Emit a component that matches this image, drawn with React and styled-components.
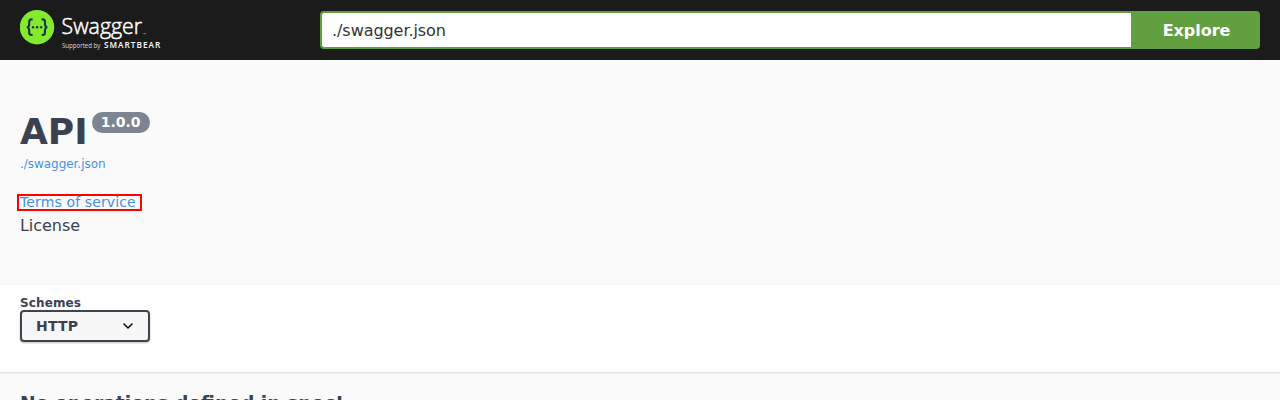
import React from "react";
import styled, { createGlobalStyle } from "styled-components";

const GlobalStyle = createGlobalStyle`
  *, *::before, *::after { box-sizing: border-box; }
  html { overflow: hidden; }
  body {
    margin: 0;
    background: #fafafa;
    color: #3b4151;
    font-family: "DejaVu Sans", sans-serif;
  }
`;

const Page = styled.div`
  height: 400px;
  overflow: hidden;
`;

const Topbar = styled.header`
  display: flex;
  align-items: center;
  height: 60px;
  padding: 0 20px;
  background: #1b1b1b;
`;

const LogoLink = styled.a`
  flex: 0 0 300px;
  height: 40px;
`;

const UrlForm = styled.form`
  display: flex;
  flex: 1;
  height: 38px;
`;

const UrlInput = styled.input`
  flex: 1;
  min-width: 0;
  margin: 0;
  padding: 0 10px;
  border: 2px solid #62a03f;
  border-right: 0;
  border-radius: 4px 0 0 4px;
  outline: none;
  background: #fff;
  color: #333;
  font: 400 16px "DejaVu Sans", sans-serif;
  letter-spacing: -0.06px;
`;

const ExploreButton = styled.button`
  width: 129px;
  padding: 0 0 0 2px;
  border: 0;
  border-radius: 0 4px 4px 0;
  background: #62a03f;
  color: #fff;
  font: 700 16px "DejaVu Sans", sans-serif;
  letter-spacing: -0.05px;
`;

const Info = styled.section`
  height: 225px;
  padding: 50px 20px 0;
`;

const Title = styled.h2`
  display: flex;
  align-items: flex-start;
  gap: 4px;
  height: 43px;
  margin: 0;
  font-size: 36px;
  line-height: 43px;
  font-weight: 700;
`;

const Version = styled.span`
  height: 21px;
  margin-top: 2px;
  padding: 0 9px;
  border-radius: 21px;
  background: #7d8492;
  color: #fff;
  font-size: 14px;
  line-height: 21px;
`;

const SpecLink = styled.a`
  display: block;
  margin-top: 4px;
  color: #4990e2;
  font-size: 12px;
  line-height: 15px;
  letter-spacing: -0.04px;
`;

const TermsLink = styled.a`
  display: block;
  width: 125px;
  height: 17px;
  margin: 22px 0 0 -3px;
  padding-left: 1px;
  border: 2px solid #f00;
  color: #4990e2;
  font-size: 14px;
  line-height: 13px;
  letter-spacing: 0.13px;
  white-space: nowrap;
`;

const License = styled.div`
  margin-top: 5px;
  font-size: 16px;
  line-height: 19px;
  letter-spacing: -0.05px;
`;

const SchemeBar = styled.section`
  position: relative;
  height: 87px;
  padding: 10px 20px 0;
  background: #fff;
  box-shadow: 0 1px 2px rgba(0, 0, 0, 0.15);
`;

const SchemeLabel = styled.div`
  height: 15px;
  font-size: 12px;
  line-height: 17px;
  font-weight: 700;
  letter-spacing: 0.13px;
`;

const SchemeSelect = styled.div`
  display: flex;
  align-items: center;
  justify-content: space-between;
  width: 130px;
  height: 32px;
  padding: 0 15px 0 14px;
  border: 2px solid #41444e;
  border-radius: 4px;
  background: #f7f7f7;
  box-shadow: 0 1px 2px rgba(0, 0, 0, 0.25);
  font-size: 14px;
  font-weight: 700;
  letter-spacing: 0.2px;
`;

const EmptyMessage = styled.h3`
  margin: 21px 20px 0;
  font-size: 18.72px;
  line-height: 22px;
  font-weight: 700;
  white-space: nowrap;
`;

function Logo() {
  return (
    <svg width="144" height="40" viewBox="0 0 144 40" fill="#fff" fontFamily="Open Sans, sans-serif">
      <circle cx="17" cy="17.2" r="17.2" fill="#85ea2d" />
      <g fill="none" stroke="#173647" strokeWidth="2.1">
        <path d="M12.6 9.4h-1c-1.8 0-2.4.8-2.4 2.5v2.3c0 1.9-.7 2.8-2.3 3 1.6.2 2.3 1.1 2.3 3v2.3c0 1.7.6 2.5 2.4 2.5h1" />
        <path d="M21.6 9.4h1c1.8 0 2.4.8 2.4 2.5v2.3c0 1.9.7 2.8 2.3 3-1.6.2-2.3 1.1-2.3 3v2.3c0 1.7-.6 2.5-2.4 2.5h-1" />
      </g>
      <g fill="#173647">
        <circle cx="13" cy="17.2" r="1.2" />
        <circle cx="17.1" cy="17.2" r="1.2" />
        <circle cx="21.2" cy="17.2" r="1.2" />
      </g>
      <text x="41.6" y="24.3" fontSize="22" fontWeight="300" textLength="80.4" lengthAdjust="spacingAndGlyphs" stroke="#fff" strokeWidth=".5">Swagger</text>
      <path d="M123.3 23.7h2.6" stroke="#aaa" strokeWidth=".7" />
      <text x="41.9" y="37.8" fontSize="6.4" fill="#ddd" textLength="38.5" lengthAdjust="spacingAndGlyphs">Supported by</text>
      <text x="83.9" y="38" fontSize="8.2" fontWeight="600" textLength="56.4">SMARTBEAR</text>
    </svg>
  );
}

export default function App() {
  return (
    <Page>
      <GlobalStyle />
      <Topbar>
        <LogoLink><Logo /></LogoLink>
        <UrlForm>
          <UrlInput type="text" defaultValue="./swagger.json" spellCheck={false} />
          <ExploreButton type="button">Explore</ExploreButton>
        </UrlForm>
      </Topbar>
      <Info>
        <Title>API<Version>1.0.0</Version></Title>
        <SpecLink>./swagger.json</SpecLink>
        <TermsLink>Terms of service</TermsLink>
        <License>License</License>
      </Info>
      <SchemeBar>
        <SchemeLabel>Schemes</SchemeLabel>
        <SchemeSelect>
          HTTP
          <svg width="10" height="6" viewBox="0 0 10 6" fill="none" stroke="#000" strokeWidth="1.5" strokeLinecap="round" strokeLinejoin="round">
            <path d="M1 1l4 4 4-4" />
          </svg>
        </SchemeSelect>
      </SchemeBar>
      <EmptyMessage>No operations defined in spec!</EmptyMessage>
    </Page>
  );
}
